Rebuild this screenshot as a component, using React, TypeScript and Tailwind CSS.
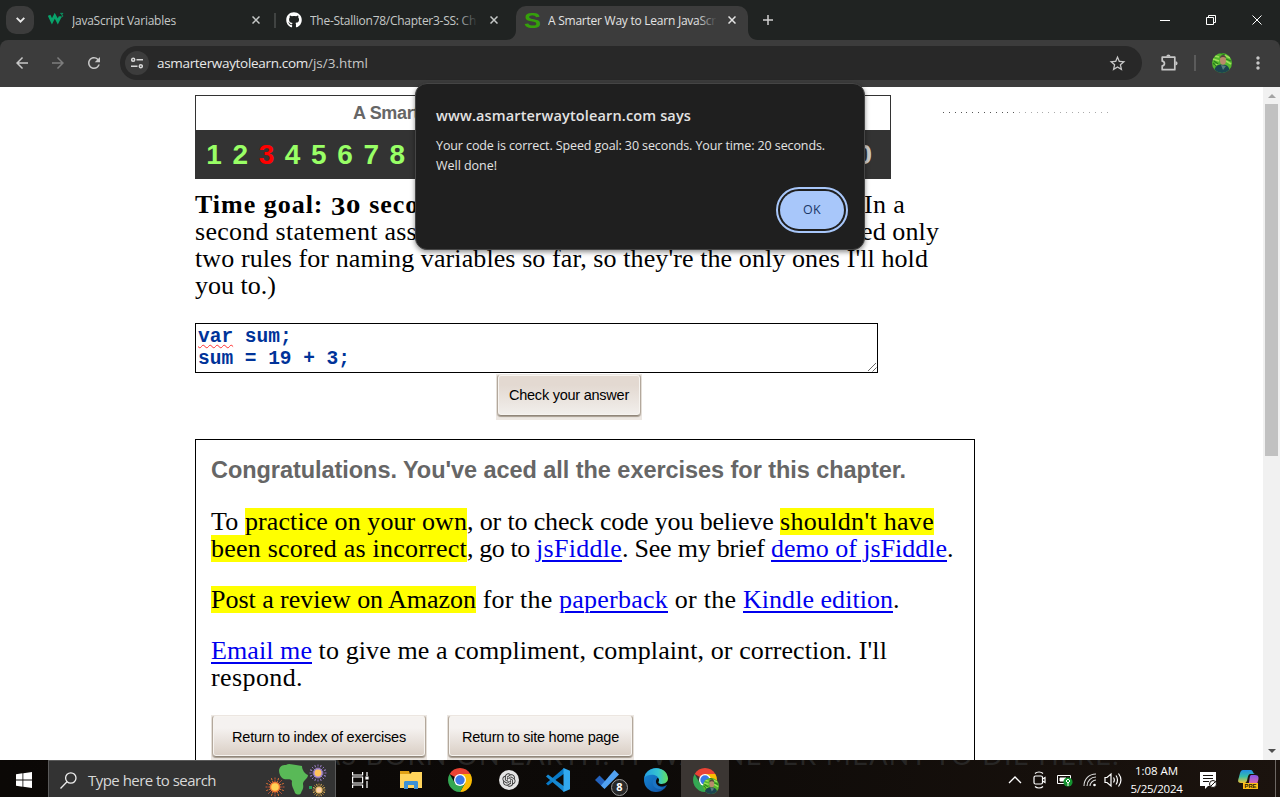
import { useLayoutEffect, useRef, useState, type ReactNode } from "react";
import { FaGithub } from "react-icons/fa";
import { RiOpenaiFill } from "react-icons/ri";
import { MdArrowBack, MdArrowForward, MdRefresh, MdStarBorder, MdMoreVert } from "react-icons/md";

/* Spreads the letters of one run of text over a given width. */
function Fit({ w, children, className = "" }: { w: number; children: string; className?: string }) {
  const ref = useRef<HTMLSpanElement>(null);
  const [spacing, setSpacing] = useState(0);
  useLayoutEffect(() => {
    if (ref.current) {
      const natural = ref.current.getBoundingClientRect().width - spacing * children.length;
      setSpacing((w - natural) / children.length);
    }
  }, [w, children]);
  return (
    <span ref={ref} className={"whitespace-pre " + className} style={{ letterSpacing: spacing }}>
      {children}
    </span>
  );
}

const serif = "font-[Georgia,'Liberation_Serif',serif]";
const sans = "font-['Liberation_Sans',Arial,sans-serif]";
const ui = "font-['Open_Sans','Noto_Sans',sans-serif]";

function CloseX({ className = "" }: { className?: string }) {
  return (
    <svg className={className} width="8" height="8" viewBox="0 0 8 8" stroke="currentColor" strokeWidth="1.5">
      <path d="M.5 .5l7 7M7.5 .5l-7 7" />
    </svg>
  );
}

function Avatar({ size }: { size: number }) {
  return (
    <svg width={size} height={size} viewBox="0 0 20 20">
      <defs>
        <clipPath id={"av" + size}><circle cx="10" cy="10" r="10" /></clipPath>
      </defs>
      <g clipPath={`url(#av${size})`}>
        <path fill="#55b72e" d="M0 0h20v20H0z" />
        <path stroke="#a0e05a" strokeWidth="1.6" d="M1 6l6 2M12 2l6 3M14 8l5 3M2 12l4-1M3 3l4 1" />
        <path stroke="#28801c" strokeWidth="1.3" d="M2 8l4 3M14 6l5 2M1 10l3 3M8 0l5 2" />
        <path fill="#1c4450" d="M2 20c0-6 3-8.500 8-8.500S18 14 18 20z" />
        <path fill="#587d7d" d="M9 12l2 5 3-4z" />
        <ellipse cx="11" cy="7.500" rx="3" ry="4.200" fill="#b98a6c" />
        <path fill="#54453c" d="M8 5c0-4 6-4 6 0-2-1.300-4-1.300-6 0z" />
      </g>
    </svg>
  );
}

function Chrome({ size = 24 }: { size?: number }) {
  return (
    <svg width={size} height={size} viewBox="0 0 24 24">
      <path fill="#ea4335" d="M12 12L1.610 6A12 12 0 0 1 22.390 6z" />
      <path fill="#fbbc04" d="M12 12V6h10.390A12 12 0 0 1 12 24l5.200-9z" />
      <path fill="#34a853" d="M12 12l5.200 3L12 24A12 12 0 0 1 1.610 6l5.200 9z" />
      <circle cx="12" cy="12" r="6" fill="#fff" />
      <circle cx="12" cy="12" r="4.700" fill="#3b78e7" />
    </svg>
  );
}

function Tab({ icon, title, w, close }: { icon: ReactNode; title: string; w: number; close: string }) {
  return (
    <div className="flex h-[34px] flex-1 items-center">
      <span className="flex w-4 shrink-0 items-center justify-center">{icon}</span>
      <span className="mt-[2px] ml-[8px] flex-1 overflow-hidden text-[12px]"><Fit w={w}>{title}</Fit></span>
      <CloseX className={"shrink-0 " + close} />
    </div>
  );
}

function TabStrip() {
  return (
    <div className={`flex h-10 shrink-0 bg-[#202322] pl-[6px] text-[#c5c8c7] ${ui}`}>
      <div className="mt-[6px] flex h-7 w-7 items-center justify-center rounded-[10px] bg-[#3c3c3c]">
        <svg width="9" height="6" viewBox="0 0 9 6" fill="none" stroke="#e8e8e8" strokeWidth="1.900"><path d="M.700.800l3.800 3.800L8.300.800" /></svg>
      </div>
      <div className="mt-[3px] flex w-[226px] pl-[14px]">
        <Tab w={104} close="" title="JavaScript Variables" icon={
          <svg className="-mt-[2px]" width="17" height="14" viewBox="0 0 17 14" fill="none" stroke="#08a36b">
            <path strokeWidth="3" d="M1.200 3l3 6.500 3-6 3.200 6L13 4.500" />
            <path strokeWidth="1" d="M13 1h2.800l-1.500 1.700c2 0 2 2.300-.300 2.100l-1-.500" />
          </svg>
        } />
      </div>
      <div className="mt-[13px] ml-[14px] h-[15px] w-[2px] bg-[#404342]" />
      <div className="relative mt-[3px] ml-[10px] flex w-[212px]">
        <Tab w={166} close="ml-[13px]" title="The-Stallion78/Chapter3-SS: Ch" icon={<FaGithub size={16} color="#fff" />} />
        <div className="absolute top-2 right-[20px] h-5 w-5 bg-linear-to-r from-transparent to-[#202322]" />
      </div>
      <div className="flex-none pl-[8px]">
        <svg className="mt-[30px] block" width="10" height="10" viewBox="0 0 10 10" fill="#3c3c3c"><path d="M10 0v10H0C6 10 10 6 10 0z" /></svg>
      </div>
      <div className="relative mt-[6px] flex w-[232px] rounded-t-[10px] bg-[#3c3c3c] pr-[12px] pl-[8px] text-[#e3e3e3]">
        <div className="-mt-[3px] flex flex-1">
          <Tab w={168} close="ml-[10px]" title="A Smarter Way to Learn JavaScr" icon={
            <span className="mt-[1px] scale-x-[1.150] font-['Liberation_Sans'] text-[22px] leading-none font-bold text-[#35a00b]">S</span>
          } />
        </div>
        <div className="absolute top-1 right-[31px] h-5 w-5 bg-linear-to-r from-transparent to-[#3c3c3c]" />
      </div>
      <svg className="mt-[30px] block" width="10" height="10" viewBox="0 0 10 10" fill="#3c3c3c"><path d="M0 0v10h10C4 10 0 6 0 0z" /></svg>
      <svg className="mt-[15px] ml-[5px]" width="10" height="10" viewBox="0 0 10 10" stroke="#d0d0d0" strokeWidth="1.500"><path d="M5 0v10M0 5h10" /></svg>
      <svg className="mt-[14px] ml-auto" width="104" height="12" viewBox="0 0 104 12" fill="none" stroke="#fff">
        <path d="M0 6.500h10" />
        <path d="M46.500 3.500h7v7h-7zM48.500 3.500v-2h7v7h-2" />
        <path d="M92.500 1.500l9 9M101.500 1.500l-9 9" />
      </svg>
      <div className="w-4" />
    </div>
  );
}

function Toolbar() {
  return (
    <div className="shrink-0 bg-[#202322]">
      <div className={`flex h-[47px] items-center rounded-t-[8px] bg-[#3c3c3c] pb-[1px] pl-[13px] text-[#c7c7c7] ${ui}`}>
        <MdArrowBack size={18} />
        <MdArrowForward size={18} className="ml-[18px] text-[#7d7d7d]" />
        <MdRefresh size={18} className="ml-[18px]" />
        <div className="ml-[17px] flex h-[34px] w-[1022px] items-center rounded-full bg-[#282828] pl-[5px]">
          <div className="flex h-6 w-6 items-center justify-center rounded-full bg-[#3c3c3c]">
            <svg width="12" height="12" viewBox="0 0 12 12" fill="none" stroke="#d7d7d7" strokeWidth="1.500">
              <circle cx="2.200" cy="2.800" r="1.500" /><path d="M5.500 2.800H12M0 9.200h6.500" /><circle cx="9.800" cy="9.200" r="1.500" />
            </svg>
          </div>
          <span className="ml-[8px] flex-1 text-[13.500px] text-[#e8e8e8]">
            <Fit w={151}>asmarterwaytolearn.com</Fit><Fit w={60} className="text-[#c7c7c7]">/js/3.html</Fit>
          </span>
          <MdStarBorder size={19} className="mr-[15px]" />
        </div>
        <svg className="ml-[18px]" width="19" height="18" viewBox="0 0 19 18" fill="none" stroke="#c7c7c7" strokeWidth="1.700" strokeLinejoin="round">
          <path d="M2.200 3.200h12.600v12.500H2.200v-3.800c3-.300 3-4.400 0-4.700z" />
          <path fill="#c7c7c7" stroke="none" d="M6.300 2.600a2.100 2.100 0 0 1 4.200 0zM15.500 7.200a2.100 2.100 0 0 1 0 4.200z" />
        </svg>
        <div className="ml-[15px] h-4 w-[2px] bg-[#5b5b5b]" />
        <div className="ml-[16px]"><Avatar size={20} /></div>
        <MdMoreVert size={20} className="ml-[16px]" />
      </div>
    </div>
  );
}

const chapters = [1, 2, 3, 4, 5, 6, 7, 8];
const dots = Array.from({ length: 29 }, (_, i) => i);

function StoneButton({ children, w, className, face }: { children: string; w: number; className: string; face: string }) {
  return (
    <div className={"shrink-0 bg-[#ece7e2] px-[1px] pb-[4px] " + className}>
      <div className={`flex h-full items-center justify-center rounded-[4px] border border-t-[#ece6e1] border-r-[#b3a89c] border-b-[#90867a] border-l-[#b3a89c] pt-[2px] text-[14.500px] text-black shadow-[inset_0_0_0_1px_#f7f4f0,0_1px_1px_#a79c90] ${sans} ${face}`}>
        <Fit w={w}>{children}</Fit>
      </div>
    </div>
  );
}

const mark = "bg-[#ff0] py-0";
const link = "text-[#0000ee] underline decoration-[1.500px] underline-offset-[3px]";
const lightFirst = "bg-linear-to-b from-[#f5f2f0] from-30% to-[#d9cec4]";

function Page() {
  return (
    <div className="flex min-h-0 flex-1 overflow-hidden bg-white">
      <div className="flex w-[1263px] flex-col pl-[195px] text-black">
        <div className="mt-[8px] flex shrink-0">
          <div className="h-[84px] w-[696px] border border-[#333] bg-white">
            <div className={`h-[34px] pl-[157px] text-[18px] leading-[35px] font-bold text-[#666] ${sans}`}><Fit w={66}>A Smart</Fit></div>
            <div className={`flex h-[49px] bg-[#333] pl-[5px] text-[28px] leading-[49px] font-bold text-[#9f6] ${sans}`}>
              {chapters.map((n) => (
                <span key={n} className={n === 3 ? "w-[26.200px] text-center text-[red]" : "w-[26.200px] text-center"}>{n}</span>
              ))}
              <span className="mr-[18px] ml-auto text-[#ccc]">0</span>
            </div>
          </div>
          <svg className="mt-[16px] ml-[52px]" width="170" height="3">
            {dots.map((i) => (
              <rect key={i} x={Math.round(i * 5.85)} y="1" width="1" height="1" fill={i < 13 ? "#555" : "#aaa"} />
            ))}
          </svg>
        </div>
        <div className={`mt-[12px] flex w-[760px] shrink-0 flex-col text-[26px] leading-[27px] ${serif}`}>
          <div className="flex h-[27px]">
            <b className="flex w-[669px]">
              <Fit w={136}>Time goal: </Fit>
              <span className="mt-[5px] h-[22px] w-[15px] origin-left scale-x-110 leading-[22px]">3</span>
              <span className="mt-[3px] h-[24px] w-[16px] origin-left scale-x-[1.600] text-[18px] leading-[26px]">0</span>
              <Fit w={57}> seco</Fit>
            </b>
            <Fit w={41}>In a</Fit>
          </div>
          <div className="flex h-[27px]">
            <span className="w-[666px]"><Fit w={222}>second statement ass</Fit></span>
            <Fit w={78}>ed only</Fit>
          </div>
          <div className="h-[27px]"><Fit w={733}>two rules for naming variables so far, so they're the only ones I'll hold</Fit></div>
          <div className="h-[27px]"><Fit w={81}>you to.)</Fit></div>
        </div>
        <div className="mt-[24px] flex h-[50px] w-[683px] shrink-0 border border-black pt-[3px] pl-[2px] font-['Liberation_Mono',monospace] text-[19.500px] leading-[21.500px] font-bold text-[#039]">
          <div className="flex-1">
            <div><Fit w={35.1} className="underline decoration-[#f33] decoration-wavy decoration-[0.800px] underline-offset-[2px]">var</Fit><Fit w={58.5}> sum;</Fit></div>
            <div><Fit w={152}>sum = 19 + 3;</Fit></div>
          </div>
          <svg className="mt-auto" width="9" height="9" stroke="#555" strokeWidth=".900"><path d="M0 8l8-8M4.500 8.500l4-4" /></svg>
        </div>
        <StoneButton w={120} face="bg-linear-to-b from-[#e3d9d1] from-25% to-[#f2efec]" className="mt-[1px] ml-[301px] h-[46px] w-[146px]">Check your answer</StoneButton>
        <div className={`mt-[19px] flex h-[340px] w-[780px] shrink-0 flex-col border border-black pl-[15px] ${serif} text-[26px] leading-[27px]`}>
          <div className={`mt-[16px] h-[28px] text-[23.500px] leading-[28px] font-bold text-[#666] ${sans}`}>
            <Fit w={695}>Congratulations. You've aced all the exercises for this chapter.</Fit>
          </div>
          <div className="mt-[24px]">
            <div className="flex h-[27px]"><Fit w={34}>To </Fit><Fit w={222} className={mark}>practice on your own</Fit><Fit w={313}>, or to check code you believe </Fit><Fit w={154} className={mark}>shouldn't have</Fit></div>
            <div className="flex h-[27px]"><Fit w={256} className={mark}>been scored as incorrect</Fit><Fit w={69}>, go to </Fit><Fit w={86} className={link}>jsFiddle</Fit><Fit w={149}>. See my brief </Fit><Fit w={176} className={link}>demo of jsFiddle</Fit><span>.</span></div>
          </div>
          <div className="mt-[24px] flex h-[27px]"><Fit w={265} className={mark}>Post a review on Amazon</Fit><Fit w={83}> for the </Fit><Fit w={109} className={link}>paperback</Fit><Fit w={75}> or the </Fit><Fit w={150} className={link}>Kindle edition</Fit><span>.</span></div>
          <div className="mt-[24px]">
            <div className="flex h-[27px]"><Fit w={101} className={link}>Email me</Fit><Fit w={575}> to give me a compliment, complaint, or correction. I'll</Fit></div>
            <div className="flex h-[27px]"><Fit w={92}>respond.</Fit></div>
          </div>
          <div className="mt-[24px] flex gap-[20px]">
            <StoneButton w={174} face={lightFirst} className="h-[46px] w-[216px]">Return to index of exercises</StoneButton>
            <StoneButton w={157} face={lightFirst} className="h-[46px] w-[187px]">Return to site home page</StoneButton>
          </div>
        </div>
      </div>
      <div className="flex w-[17px] flex-col items-center bg-[#f1f1f1]">
        <svg className="mt-[7px] mb-[6px] shrink-0" width="8" height="4" fill="#a3a3a3"><path d="M4 0l4 4H0z" /></svg>
        <div className="h-[352px] w-[13px] shrink-0 bg-[#c1c1c1]" />
        <svg className="mt-auto mb-[7px] shrink-0" width="8" height="4" fill="#505050"><path d="M0 0h8L4 4z" /></svg>
      </div>
    </div>
  );
}

function AlertDialog() {
  return (
    <div className={`absolute top-[83px] left-[415px] flex h-[167px] w-[450px] flex-col rounded-[12px] border border-[#454545] bg-[#1f1f1f] pt-[21px] pl-[20px] text-[#e3e3e3] shadow-[0_2px_5px_rgba(0,0,0,.45)] ${ui}`}>
      <div className="h-[22px] text-[14.500px] leading-[22px] font-semibold"><Fit w={255}>www.asmarterwaytolearn.com says</Fit></div>
      <div className="mt-[9px] text-[12.500px] leading-[20px]">
        <div><Fit w={389}>Your code is correct. Speed goal: 30 seconds. Your time: 20 seconds.</Fit></div>
        <div><Fit w={61}>Well done!</Fit></div>
      </div>
      <div className="mt-[11px] mr-[16px] flex h-[46px] w-[72px] self-end rounded-full border-2 border-[#a8c7fa] p-[2px]">
        <button className="flex flex-1 items-center justify-center rounded-full bg-[#a8c7fa] pt-[1px] text-[12.500px] font-medium text-[#1b3768]"><Fit w={18}>OK</Fit></button>
      </div>
    </div>
  );
}

const rays = Array.from({ length: 16 }, (_, i) => i * 22.5);

function Burst({ x, y, r, ray, ring, core }: { x: number; y: number; r: number; ray: string; ring: string; core: string }) {
  return (
    <g transform={`translate(${x} ${y})`}>
      {rays.map((a, i) => (
        <path key={a} transform={`rotate(${a})`} stroke={i % 2 ? ring : ray} strokeWidth=".900" strokeDasharray="2 .8" d={`M0 ${-r}V0`} />
      ))}
      <circle r={r * 0.55} fill={ring} />
      <circle r={r * 0.4} fill={core} />
    </g>
  );
}

function Slot({ children, className = "" }: { children: ReactNode; className?: string }) {
  return <div className={"flex h-full w-[49px] shrink-0 items-center justify-center pt-[3px] " + className}>{children}</div>;
}

function Taskbar() {
  return (
    <div className={`relative flex h-[37px] shrink-0 overflow-hidden bg-linear-to-r from-[#0b0806] via-[#0d0a08] to-[#1b130e] text-white ${ui}`}>
      <div className="absolute top-0 left-[322px] h-[8px] overflow-hidden font-[Lato,sans-serif] text-[27px] leading-[0px] text-[#272625]">
        <div className="-mt-[5px]"><Fit w={798}>AS BORN ON EARTH. IT WAS NEVER MEANT TO DIE HERE.</Fit></div>
      </div>
      <div className="flex w-12 items-center justify-center pt-[3px]">
        <svg width="16" height="16" viewBox="0 0 16 16" fill="#fff"><path d="M0 2.200L6.500 1.300v6.200H0zM7.300 1.200L16 0v7.500H7.300zM0 8.400h6.500v6.300L0 13.800zM7.300 8.400H16V16l-8.700-1.200z" /></svg>
      </div>
      <div className="relative flex w-[288px] items-center border border-b-0 border-[#5a5a5a] bg-[#333] pl-[11px]">
        <svg className="mt-[3px]" width="17" height="17" viewBox="0 0 17 17" fill="none" stroke="#eee" strokeWidth="1.300"><circle cx="10.800" cy="6" r="5.200" /><path d="M7 9.800L.500 16.500" /></svg>
        <span className="mt-[3px] ml-[11px] text-[15px] text-[#d8d8d8]"><Fit w={128}>Type here to search</Fit></span>
        <svg className="ml-auto" width="71" height="36" viewBox="0 0 71 36">
          <path fill="#59b957" d="M15 9c1-4 3-5 7-5 3-2 7 0 10 0l6 1c0 4 3 8 6 9 0 4-5 5-5 9 1 5-1 6-2 9-1 2-4 2-6 0-1-4-4-7-3-12-2-3-5-1-8-2-3-1-5-5-5-9z" />
          <Burst x={11} y={26} r={9.5} ray="#dc5b3d" ring="#f27a35" core="#ffd155" />
          <Burst x={54} y={12} r={8.5} ray="#9b72cf" ring="#a98bd6" core="#ffc45b" />
          <Burst x={55} y={29} r={6.5} ray="#c48e35" ring="#dfb45a" core="#fbd0aa" />
          <path fill="#26a15b" d="M45 25h3v3h-3z" />
        </svg>
      </div>
      <Slot>
        <svg width="17" height="16" viewBox="0 0 17 16" fill="none" stroke="#fff" strokeWidth="1.200"><path d="M.600 0v3h10V0M.600 5h10v6H.600zM.600 16v-3h10v3M15 0v4M15 9v7" /><path fill="#fff" d="M14 5h2v2h-2z" /></svg>
      </Slot>
      <Slot className="ml-[1px]">
        <svg width="22" height="20" viewBox="0 0 22 20">
          <path fill="#e0a116" d="M0 1h9l1 3H0z" /><path fill="#ffd45c" d="M0 4h10l2-2h10v16H0z" />
          <path fill="#3c91d4" d="M4 19v-6.500c0-1 .700-1.500 1.500-1.500h11c1 0 1.500.500 1.500 1.500V19h-4v-4H8v4z" />
        </svg>
      </Slot>
      <Slot><Chrome /></Slot>
      <Slot><span className="flex h-5 w-5 items-center justify-center rounded-full bg-[#e4e4e4] text-[#333]"><RiOpenaiFill size={16} /></span></Slot>
      <Slot>
        <svg width="24" height="24" viewBox="0 0 24 24">
          <path fill="#0879c7" d="M18 0L0 15.500 2 17.500 19 5z" /><path fill="#1689d2" d="M18 24L0 8.500l2-2L19 19z" /><path fill="#31a8ef" d="M17.500 0L24 2.800v18.400L17.500 24z" />
        </svg>
      </Slot>
      <Slot className="relative">
        <svg width="24" height="20" viewBox="0 0 24 20"><path fill="#2362bd" d="M0 10l4.500-4.500 8 8L8.500 18z" /><path fill="#51a1f1" d="M6 15.500L19.500 0 24 4.500 9.500 19z" /></svg>
        <span className="absolute top-[19px] left-[29px] flex h-[17px] w-[17px] items-center justify-center rounded-full border border-[#999] bg-[#292929] text-[11px] font-bold">8</span>
      </Slot>
      <Slot>
        <svg width="24" height="24" viewBox="0 0 24 24">
          <defs>
            <linearGradient id="edgeTop" x2="1"><stop stopColor="#249fe3" /><stop offset=".6" stopColor="#36c6cf" /><stop offset="1" stopColor="#65df55" /></linearGradient>
            <linearGradient id="edgeLow" x2="1" y2="1"><stop stopColor="#168edc" /><stop offset="1" stopColor="#104c9e" /></linearGradient>
          </defs>
          <circle cx="12" cy="12" r="12" fill="url(#edgeLow)" />
          <path fill="#0b0908" d="M13.500 10c-3.500 3.800-.500 9 5.500 8.500l3.500-1.200 2-1V11H16z" />
          <path fill="#1b74c4" d="M9 12c-2 7 5 11.500 12.500 7.300C15 21 9.500 16 12.500 10.500z" />
          <path fill="url(#edgeTop)" d="M.300 10C2-3 23-3.500 24 10.500c0 5.500-7 6.500-9.300 4.400-.800-.900.500-1.400.300-3.400C14.500 6 4 5 .300 10z" />
        </svg>
      </Slot>
      <div className="relative ml-[1px] flex w-[48px] shrink-0 items-center justify-center bg-[#3b3633] pt-[3px]">
        <Chrome />
        <span className="absolute top-[18px] left-[22px]"><Avatar size={16} /></span>
      </div>
      <div className="ml-auto flex items-center pt-[3px]">
        <svg width="14" height="8" fill="none" stroke="#fff" strokeWidth="1.300"><path d="M1 7l6-6 6 6" /></svg>
        <svg className="ml-[11px]" width="14" height="18" viewBox="0 0 14 18" fill="none" stroke="#fff" strokeWidth="1.200"><rect x="1" y="5" width="8.500" height="8" rx="1.500" /><path d="M9.500 8l2.500-1.500v5L9.500 10M2 2.500c2-2 6-2 8 0M2 15.500c2 2 6 2 8 0" /></svg>
        <svg className="ml-[10px]" width="16" height="14" viewBox="0 0 16 14" fill="none" stroke="#fff"><path d="M.500 2.500h13v8H.500z" /><path fill="#fff" d="M3 5h6v3H3z" /><circle cx="11" cy="9" r="4.600" fill="#14932f" stroke="none" /><path d="M11 13V9M9 8l2-2 2 2-2 2z" /></svg>
        <svg className="ml-[10px]" width="14" height="14" viewBox="0 0 14 14" fill="none" stroke="#ddd" strokeWidth="1.100"><path d="M1 13C1 6 6 1 13 1M4 13c0-5 4-9 9-9M7 13c0-3 3-6 6-6" /><circle cx="11.500" cy="12" r="1.300" fill="#fff" stroke="none" /></svg>
        <svg className="ml-[7px]" width="18" height="16" viewBox="0 0 18 16" fill="none" stroke="#fff" strokeWidth="1.200"><path d="M1 5.500h2L7 2v12l-4-3.500H1zM9.500 5.500c1 1.500 1 3.500 0 5M12 3.500c2 2.500 2 6.500 0 9M14.500 1.500c3 4 3 9 0 13" /></svg>
        <div className="-mt-[1px] ml-[8px] flex w-[53px] flex-col items-center text-[11.500px] leading-[18px]"><Fit w={43}>1:08 AM</Fit><Fit w={52}>5/25/2024</Fit></div>
        <svg className="ml-[17px]" width="18" height="18" viewBox="0 0 18 18"><path fill="#fff" d="M0 1h16v14H8l-3 3v-3H0z" /><path stroke="#16110d" strokeWidth="1.200" d="M3 4.500h10M3 7.500h10M3 10.500h6" /><circle cx="13" cy="13" r="3.500" fill="#fff" stroke="#16110d" /><path stroke="#16110d" d="M10.500 15.500l5-5" /></svg>
        <svg className="ml-[20px]" width="21" height="20" viewBox="0 0 21 20">
          <defs><linearGradient id="pilotL" x2="0" y2="1"><stop stopColor="#208de6" /><stop offset=".5" stopColor="#38bda8" /><stop offset="1" stopColor="#f2c431" /></linearGradient><linearGradient id="pilotR" x2="0" y2="1"><stop stopColor="#8555e9" /><stop offset="1" stopColor="#f06c98" /></linearGradient></defs>
          <path fill="url(#pilotL)" d="M5 0h8c2 0 2 4 4 4h-5c-3 0-2 9-5 9H3c-4 0-3-3-2-6s1-7 4-7z" />
          <path fill="url(#pilotR)" d="M13 5h4c4 0 4 3 3 6s-1 5-4 5H9c3-1 2-11 4-11z" />
          <rect x="5" y="13" width="15" height="6" fill="#ffbe16" />
          <text x="12.500" y="18.200" textAnchor="middle" fontSize="5.800" fontWeight="800" fontFamily="Liberation Sans" fill="#20180a">PRE</text>
        </svg>
        <div className="-mt-[3px] ml-[16px] h-[37px] w-px bg-[#6d6763]" />
        <div className="w-[4px]" />
      </div>
    </div>
  );
}

export default function App() {
  return (
    <div className="relative flex h-[797px] w-[1280px] flex-col overflow-hidden">
      <TabStrip />
      <Toolbar />
      <Page />
      <Taskbar />
      <AlertDialog />
    </div>
  );
}
